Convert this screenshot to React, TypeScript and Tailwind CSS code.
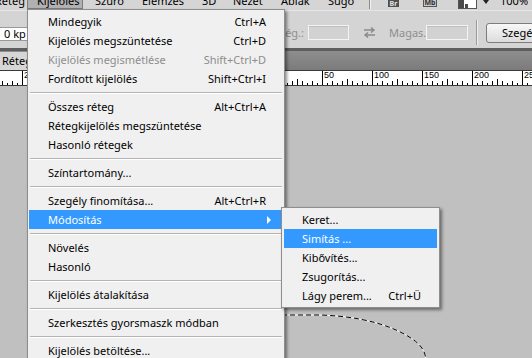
import React from "react";

type Item =
  | { label: string; shortcut?: string; disabled?: boolean; active?: boolean; sub?: boolean }
  | "sep";

const mainItems: Item[] = [
  { label: "Mindegyik", shortcut: "Ctrl+A" },
  { label: "Kijelölés megszüntetése", shortcut: "Ctrl+D" },
  { label: "Kijelölés megismétlése", shortcut: "Shift+Ctrl+D", disabled: true },
  { label: "Fordított kijelölés", shortcut: "Shift+Ctrl+I" },
  "sep",
  { label: "Összes réteg", shortcut: "Alt+Ctrl+A" },
  { label: "Rétegkijelölés megszüntetése" },
  { label: "Hasonló rétegek" },
  "sep",
  { label: "Színtartomány..." },
  "sep",
  { label: "Szegély finomítása...", shortcut: "Alt+Ctrl+R" },
  { label: "Módosítás", active: true, sub: true },
  "sep",
  { label: "Növelés" },
  { label: "Hasonló" },
  "sep",
  { label: "Kijelölés átalakítása" },
  "sep",
  { label: "Szerkesztés gyorsmaszk módban" },
  "sep",
  { label: "Kijelölés betöltése..." },
  { label: "Kijelölés mentése..." },
];

const subItems: Item[] = [
  { label: "Keret..." },
  { label: "Simítás ...", active: true },
  { label: "Kibővítés..." },
  { label: "Zsugorítás..." },
  { label: "Lágy perem...", shortcut: "Ctrl+Ü" },
];

function MenuRow({ item, sub }: { item: Item; sub?: boolean }) {
  if (item === "sep") {
    return (
      <div className="h-[9px] flex flex-col justify-center mx-[2px]">
        <div className="h-px bg-[#b4b4b4]" />
        <div className="h-px bg-white" />
      </div>
    );
  }
  const color = item.active ? "text-white" : item.disabled ? "text-[#8d8d8d]" : "text-black";
  return (
    <div
      className={`h-[19px] flex items-center whitespace-nowrap ${
        sub ? "ml-[2px] mr-[2px] pl-[18px] pr-[16px]" : "ml-px mr-[3px] pl-[19px] pr-[15px]"
      } ${item.active ? "bg-[#3399ff]" : ""} ${color}`}
    >
      <span className="flex-1">{item.label}</span>
      {item.shortcut && <span className={sub ? "ml-[14px]" : ""}>{item.shortcut}</span>}
      {item.sub && (
        <svg width="5" height="8" viewBox="0 0 5 8" className="mr-[-6px]">
          <path d="M0 0 L4 4 L0 8 Z" fill="white" />
        </svg>
      )}
    </div>
  );
}

function Ruler() {
  const ticks: React.ReactNode[] = [];
  for (let x = 2; x <= 532; x += 5) {
    const k = Math.round((x - 272) / 5);
    let y1 = 13;
    if (k % 10 === 0) y1 = 1;
    else if (k % 5 === 0) y1 = 9;
    else if (k % 2 === 0) y1 = 11;
    ticks.push(<line key={x} x1={x + 0.5} x2={x + 0.5} y1={y1} y2={15} stroke="#000" strokeWidth="1" />);
    const hidden = x > 27 && x < 286;
    if (k % 10 === 0 && !hidden) {
      ticks.push(
        <text key={"t" + x} x={x + 2} y={8} fontSize="9" fontFamily="Liberation Sans, Arial, sans-serif" fill="#000">
          {Math.abs(x - 272)}
        </text>
      );
    }
  }
  return (
    <svg width="532" height="16" viewBox="0 0 532 16" className="block bg-white">
      <line x1="0" x2="532" y1="0.5" y2="0.5" stroke="#3a3a3a" />
      <line x1="0" x2="532" y1="15.5" y2="15.5" stroke="#3a3a3a" />
      {ticks}
    </svg>
  );
}

function Input({ w }: { w: string }) {
  return (
    <div className={`${w} shrink-0 h-[15px] border border-[#f4f4f4] bg-[#d2d2d2] shadow-[inset_0_1px_0_#bdbdbd]`} />
  );
}

export default function App() {
  return (
    <div className="relative w-[532px] h-[358px] overflow-hidden bg-[#c0c0c0] font-['Noto_Sans',sans-serif] text-[11px] leading-[16px] text-black flex flex-col">
      {/* Menu bar */}
      <div className="h-[10px] bg-[#d5d5d5] flex overflow-hidden shrink-0 [&>*]:shrink-0">
        <div className="w-[27px] flex justify-end pr-[2px] -mt-[7px] whitespace-nowrap">Réteg</div>
        <div className="w-[56px] h-[9px] bg-[#b1b1b1] border border-t-0 border-[#7c7c7c] overflow-hidden">
          <div className="pl-[9px] -mt-[7px] whitespace-nowrap">Kijelölés</div>
        </div>
        <div className="w-[59px] pl-[12px] -mt-[7px] whitespace-nowrap">Szűrő</div>
        <div className="w-[60px] -mt-[7px] whitespace-nowrap">Elemzés</div>
        <div className="w-[31px] -mt-[7px] whitespace-nowrap">3D</div>
        <div className="w-[48px] -mt-[7px] whitespace-nowrap">Nézet</div>
        <div className="w-[47px] -mt-[7px] whitespace-nowrap">Ablak</div>
        <div className="w-[41px] -mt-[7px] whitespace-nowrap">Súgó</div>
        <div className="w-[1px] h-[9px] bg-[#8c8c8c]" />
        <div className="w-px h-[9px] bg-[#f2f2f2]" />
        <div className="w-[17px]" />
        <div className="w-[11px] h-[7px] bg-[#505050] text-[7px] leading-[7px] font-bold text-[#e0e0e0] flex justify-center overflow-hidden">
          Br
        </div>
        <div className="w-[24px]" />
        <div className="w-[14px] h-[7px] bg-[#c8c8c8] border border-t-0 border-[#555] text-[7px] leading-[5px] font-bold text-[#333] flex justify-center overflow-hidden">
          Mb
        </div>
        <div className="w-[21px]" />
        <div className="w-[19px] h-[9px] bg-white border border-t-0 border-[#555] flex">
          <div className="w-[5px] h-full bg-[#4a4a4a]" />
          <div className="w-px h-full bg-white" />
          <div className="w-[3px] h-[4px] bg-[#4a4a4a] self-end" />
        </div>
        <div className="w-[6px]" />
        <svg width="6" height="5" viewBox="0 0 6 5">
          <path d="M0 0 L6 0 L3 4 Z" fill="#222" />
        </svg>
        <div className="w-[11px]" />
        <div className="-mt-[7px] whitespace-nowrap">100%</div>
      </div>

      {/* Options bar */}
      <div className="h-[38px] bg-[#d4d4d4] border-t border-[#e6e6e6] flex items-center pt-[6px] shrink-0 text-[#8e8e8e] [&>*]:shrink-0">
        <div className="w-[40px] h-[14px] mt-[2px] bg-white border border-l-0 border-[#9a9a9a] text-black pl-[4px] leading-[12px] whitespace-nowrap overflow-hidden">
          0 kp
        </div>
        <div className="w-[265px] flex justify-end pr-[1px] whitespace-nowrap">Szélesség.:</div>
        <div className="w-[3px]" />
        <Input w="w-[41px]" />
        <div className="w-[14px]" />
        <svg width="13" height="11" viewBox="0 0 13 11">
          <path d="M1 3 H11 M8 0.5 L11 3 L8 5.5" stroke="#8a8a8a" strokeWidth="1.4" fill="none" />
          <path d="M12 8 H2 M5 5.5 L2 8 L5 10.5" stroke="#8a8a8a" strokeWidth="1.4" fill="none" />
        </svg>
        <div className="w-[13px]" />
        <div className="w-[34px] whitespace-nowrap">Magas.:</div>
        <div className="w-[3px]" />
        <Input w="w-[42px]" />
        <div className="w-[8px]" />
        <div className="w-px h-[25px] bg-[#9a9a9a]" />
        <div className="w-px h-[25px] bg-[#efefef]" />
        <div className="w-[8px]" />
        <div className="w-[80px] h-[20px] rounded-[3px] border border-[#7d7d7d] bg-gradient-to-b from-[#f8f8f8] to-[#dcdcdc] text-black pl-[15px] flex items-center whitespace-nowrap">
          Szegély finomítása...
        </div>
      </div>

      {/* Tab bar */}
      <div className="h-[22px] shrink-0 flex flex-col">
        <div className="h-[3px] bg-[#5e5e5e]" />
        <div className="flex-1 bg-gradient-to-b from-[#8e8e8e] to-[#7b7b7b] flex items-end">
          <div className="w-[70px] h-[18px] bg-[#d6d6d6] pl-[2px] leading-[18px] whitespace-nowrap">Réteg 1, RGB/8</div>
        </div>
      </div>

      {/* Ruler */}
      <div className="shrink-0">
        <Ruler />
      </div>

      {/* Canvas */}
      <div className="relative flex-1 bg-[#c0c0c0]">
        <svg width="532" height="272" viewBox="0 86 532 272" className="absolute left-0 top-0">
          <path
            d="M 250 315 L 320 315 C 350 316, 376 321, 396 330 C 416 339, 425 348, 425.5 358"
            fill="none"
            stroke="#fff"
            strokeWidth="1"
          />
          <path
            d="M 250 315 L 320 315 C 350 316, 376 321, 396 330 C 416 339, 425 348, 425.5 358"
            fill="none"
            stroke="#000"
            strokeWidth="1"
            strokeDasharray="5 3"
          />
        </svg>
      </div>

      {/* Main dropdown menu */}
      <div className="absolute left-[27px] top-[9px] w-[258px] h-[360px] bg-[#f0f0f0] border border-[#8e8e8e] pt-[2px] shadow-[2px_2px_3px_rgba(0,0,0,0.45)]">
        {mainItems.map((it, i) => (
          <MenuRow key={i} item={it} />
        ))}
      </div>

      {/* Submenu */}
      <div className="absolute left-[281px] top-[207px] w-[159px] h-[101px] bg-[#f0f0f0] border border-[#8e8e8e] pt-[2px] shadow-[2px_2px_3px_rgba(0,0,0,0.45)]">
        {subItems.map((it, i) => (
          <MenuRow key={i} item={it} sub />
        ))}
      </div>
    </div>
  );
}
